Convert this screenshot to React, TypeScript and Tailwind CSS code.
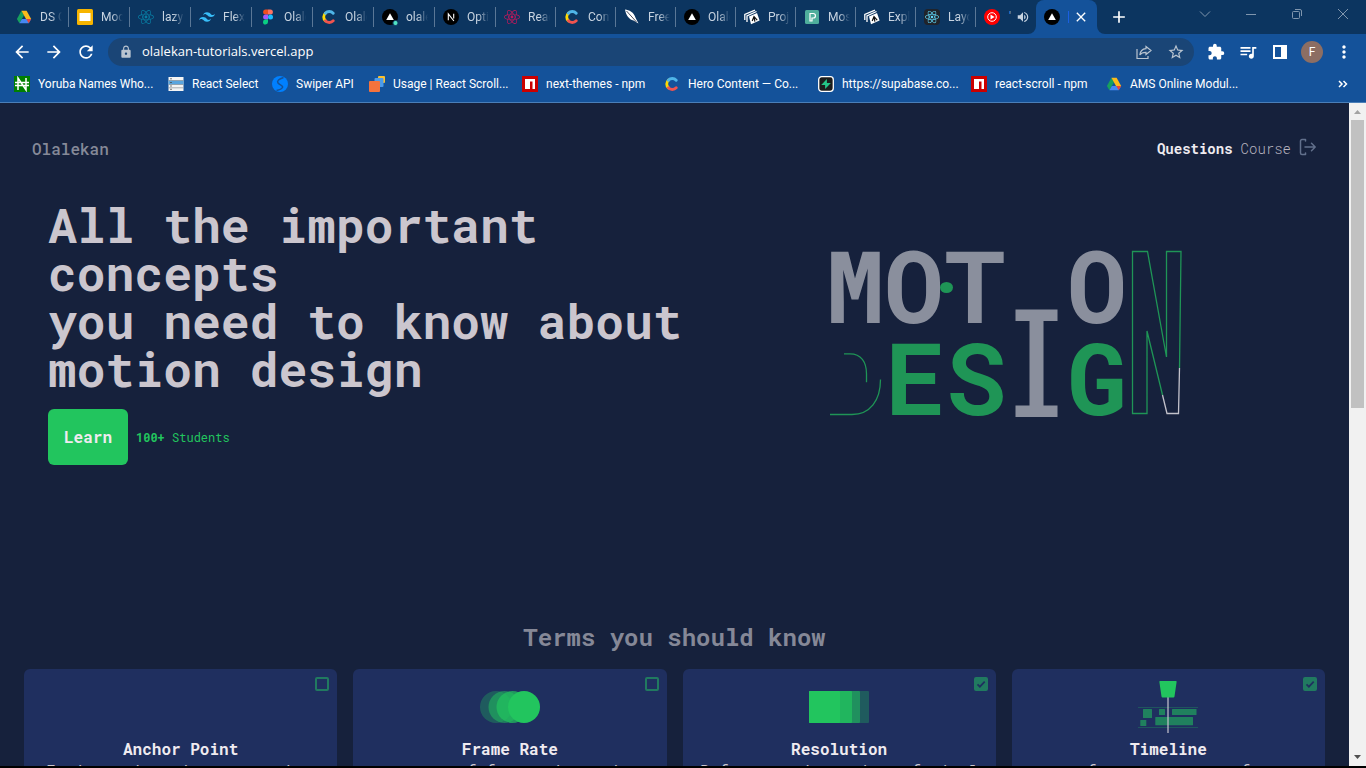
import type { ReactNode } from "react";
import { FaReact } from "react-icons/fa";
import { SiTailwindcss } from "react-icons/si";
import {
  MdArrowBack,
  MdArrowForward,
  MdRefresh,
  MdLock,
  MdStarBorder,
  MdExtension,
  MdQueueMusic,
  MdMoreVert,
  MdAdd,
  MdClose,
  MdVolumeUp,
} from "react-icons/md";

const Drive = () => (
  <svg viewBox="0 0 16 16" className="size-4 shrink-0">
    <path d="M5.4 1.8 8 6.3 3.4 14.2.9 9.9z" fill="#17a05d" />
    <path d="M5.4 1.8h5.2l4.6 8.1H10z" fill="#fcbb1b" />
    <path d="M5.9 9.9h9.3l-2.5 4.3H3.4z" fill="#4688f4" />
    <path d="M10.3 9.9h4.9l-2.5 4.3z" fill="#e8453c" />
  </svg>
);

const Slides = () => (
  <svg viewBox="0 0 16 16" className="size-4 shrink-0">
    <rect width="16" height="16" rx="1.5" fill="#f7b500" />
    <rect x="2.5" y="4" width="11" height="8" fill="#fff" />
  </svg>
);

const Figma = () => (
  <svg viewBox="0 0 16 16" className="size-4 shrink-0">
    <path d="M8 .5H5.6a2.5 2.5 0 0 0 0 5H8z" fill="#f24e1e" />
    <path d="M8 .5h2.4a2.5 2.5 0 0 1 0 5H8z" fill="#ff7262" />
    <path d="M8 5.5H5.6a2.5 2.5 0 0 0 0 5H8z" fill="#a259ff" />
    <circle cx="10.5" cy="8" r="2.5" fill="#1abcfe" />
    <path d="M8 10.5H5.6A2.5 2.5 0 1 0 8 13z" fill="#0acf83" />
  </svg>
);

const Contentful = () => (
  <svg viewBox="0 0 16 16" className="size-4 shrink-0" fill="none" strokeWidth="3" strokeLinecap="round">
    <path d="M4.4 4.2a5.4 5.4 0 0 0 0 7.6" stroke="#ffda00" />
    <path d="M4.4 4.2a5.4 5.4 0 0 1 7.8 0" stroke="#4fb5e8" />
    <path d="M4.4 11.8a5.4 5.4 0 0 0 7.8 0" stroke="#f0544f" />
  </svg>
);

const Vercel = ({ dot = false }: { dot?: boolean }) => (
  <svg viewBox="0 0 16 16" className="size-4 shrink-0 overflow-visible">
    <circle cx="8" cy="8" r="8" fill="#000" />
    <path d="M8 4.2 11.8 11H4.2z" fill="#fff" />
    {dot && <circle cx="13.5" cy="14" r="2.6" fill="#50e3c2" stroke="#0c3560" />}
  </svg>
);

const Next = () => (
  <svg viewBox="0 0 16 16" className="size-4 shrink-0">
    <circle cx="8" cy="8" r="8" fill="#000" />
    <path d="M5.3 11.2V4.8l5.6 7.2M10.7 4.8v4.6" stroke="#fff" strokeWidth="1.1" fill="none" />
  </svg>
);

const Feather = () => (
  <svg viewBox="0 0 16 16" className="size-4 shrink-0">
    <path d="M1 .5c4 .5 9 2.500 10.600 8.500L14.500 14.500 9.500 11.500C5 10.500 2 6 1 .5z" fill="#fff" />
    <path d="M2.500 2 12.500 13" stroke="#223" strokeWidth=".8" />
  </svg>
);

const Sheets = () => (
  <svg viewBox="0 0 16 16" className="size-4 shrink-0">
    <path d="M.8 11V5.400L11 1.200M3 13V6.800L12.500 2.500" stroke="#fff" strokeWidth="1.300" fill="none" />
    <path d="M5 7.500 13 4l2.600 7.600L7 15.200z" fill="#fff" />
    <path d="m8.200 12 1.800-4.300 3.200 3.400M10 7.700l.9 5" stroke="#111" strokeWidth="1.200" fill="none" />
  </svg>
);

const Postman = () => (
  <svg viewBox="0 0 16 16" className="size-4 shrink-0">
    <rect x="1" y="1" width="14" height="14" rx="1.500" fill="#4fae9c" />
    <path d="M6 12V4.500h3.200a2.200 2.200 0 0 1 0 4.500H8v3z" fill="none" stroke="#fff" strokeWidth="1.200" />
  </svg>
);

const ReactDark = () => (
  <span className="flex size-4 shrink-0 items-center justify-center rounded-sm bg-[#20232a]">
    <FaReact className="size-3.5 text-[#61dafb]" />
  </span>
);

const YouTubeMusic = () => (
  <svg viewBox="0 0 16 16" className="size-4 shrink-0">
    <circle cx="8" cy="8" r="8" fill="#f00" />
    <circle cx="8" cy="8" r="4.300" fill="none" stroke="#fff" />
    <path d="M6.500 5.600 10.600 8l-4.100 2.400z" fill="#fff" />
  </svg>
);

const Naira = () => (
  <svg viewBox="0 0 16 16" className="size-4 shrink-0">
    <rect width="16" height="16" fill="#008000" />
    <path d="M4 14V2l8 12V2M1 6.500h14M1 9.500h14" stroke="#fff" strokeWidth="1.500" fill="none" />
  </svg>
);

const SelectIcon = () => (
  <svg viewBox="0 0 16 16" className="size-4 shrink-0">
    <rect x=".5" y="1" width="15" height="14" fill="#f4f4f4" />
    <rect x=".5" y="4.500" width="15" height="4" fill="#5aa5de" />
    <path d="M.5 4.500h15M.5 8.500h15M.5 11.800h15" stroke="#8a8f96" strokeWidth=".7" />
    <path d="M2 2.800h2M2 6.500h2M2 10h2M2 13.300h2" stroke="#444" strokeWidth=".7" />
  </svg>
);

const Swiper = () => (
  <svg viewBox="0 0 16 16" className="size-4 shrink-0">
    <circle cx="8" cy="8" r="8" fill="#0080ff" />
    <path d="M11.500 1.500C7 3 4.500 5 6 7s5.500 2.500 4.500 4.500S7 14 4.500 14.500" stroke="#14529a" strokeWidth="1.500" fill="none" />
  </svg>
);

const Stack = () => (
  <svg viewBox="0 0 16 16" className="size-4 shrink-0">
    <rect x="9" y="0" width="7" height="7" rx="1" fill="#fbc02d" />
    <rect x="5.500" y="2" width="9" height="9" rx="1" fill="#4c9bea" />
    <rect x="0" y="5" width="11" height="11" rx="1" fill="#f4733d" />
  </svg>
);

const Npm = () => (
  <svg viewBox="0 0 16 16" className="size-4 shrink-0">
    <rect width="16" height="16" fill="#cb0000" />
    <path d="M3 3h10v10h-2.500V5.500H8V13H3z" fill="#fff" />
  </svg>
);

const Supabase = () => (
  <svg viewBox="0 0 16 16" className="size-4 shrink-0">
    <rect x=".7" y=".7" width="14.600" height="14.600" rx="3" fill="#1c1c1c" stroke="#fff" strokeWidth="1.300" />
    <path d="M8.900 3v4h4L7.100 13V9H3.200z" fill="#24c487" />
  </svg>
);

const wide = "w-[61px]";
const narrow = "w-[60px]";

const tabs: { title: string; icon: ReactNode; width: string }[] = [
  { title: "DS Colors", icon: <Drive />, width: wide },
  { title: "Modules", icon: <Slides />, width: wide },
  { title: "lazy", icon: <FaReact className="size-4 shrink-0 text-[#087ea4]" />, width: wide },
  { title: "Flexbox", icon: <SiTailwindcss className="size-4 shrink-0 text-[#38bdf8]" />, width: wide },
  { title: "Olalekan", icon: <Figma />, width: wide },
  { title: "Olalekan", icon: <Contentful />, width: wide },
  { title: "olalekan", icon: <Vercel dot />, width: wide },
  { title: "Optimize", icon: <Next />, width: wide },
  { title: "React", icon: <FaReact className="size-4 shrink-0 text-[#c2185b]" />, width: narrow },
  { title: "Content", icon: <Contentful />, width: narrow },
  { title: "Freelance", icon: <Feather />, width: narrow },
  { title: "Olalekan", icon: <Vercel />, width: narrow },
  { title: "Project", icon: <Sheets />, width: narrow },
  { title: "Most", icon: <Postman />, width: narrow },
  { title: "Explore", icon: <Sheets />, width: narrow },
  { title: "Layout", icon: <ReactDark />, width: narrow },
];

const bookmarks: { title: string; icon: ReactNode; width: string }[] = [
  { title: "Yoruba Names Who...", icon: <Naira />, width: "w-[154px]" },
  { title: "React Select", icon: <SelectIcon />, width: "w-[104px]" },
  { title: "Swiper API", icon: <Swiper />, width: "w-[97px]" },
  { title: "Usage | React Scroll...", icon: <Stack />, width: "w-[153px]" },
  { title: "next-themes - npm", icon: <Npm />, width: "w-[142px]" },
  { title: "Hero Content — Co...", icon: <Contentful />, width: "w-[154px]" },
  { title: "https://supabase.co...", icon: <Supabase />, width: "w-[153px]" },
  { title: "react-scroll - npm", icon: <Npm />, width: "w-[135px]" },
  { title: "AMS Online Modul...", icon: <Drive />, width: "w-[140px]" },
];

function TabStrip() {
  return (
    <div className="flex h-[34px] shrink-0 bg-[#0c3560] pl-2">
      {tabs.map((tab, i) => (
        <button key={i} className={`flex shrink-0 items-center pl-2 text-left ${tab.width}`}>
          {tab.icon}
          <span className="ml-2 w-[22px] overflow-hidden whitespace-nowrap text-xs text-[#c8d4e1] [mask-image:linear-gradient(to_right,#000_50%,transparent)]">
            {tab.title}
          </span>
          <span className="ml-auto h-5 w-px bg-[#5a7796]" />
        </button>
      ))}
      <button aria-label="YouTube Music" className="flex w-[60px] shrink-0 items-center pl-2">
        <YouTubeMusic />
        <span className="ml-2 w-1 overflow-hidden text-xs text-[#6fa8e8]">'</span>
        <MdVolumeUp className="ml-1 size-3.5 text-[#c8d4e1]" />
      </button>
      <div className="relative flex w-[61px] shrink-0 items-center rounded-t-lg bg-[#14529a] pl-2">
        <svg viewBox="0 0 8 8" className="absolute bottom-0 -left-2 size-2" fill="#14529a">
          <path d="M8 0v8H0a8 8 0 0 0 8-8z" />
        </svg>
        <svg viewBox="0 0 8 8" className="absolute -right-2 bottom-0 size-2" fill="#14529a">
          <path d="M0 0v8h8a8 8 0 0 1-8-8z" />
        </svg>
        <Vercel />
        <span className="ml-2 h-3 w-px bg-[#1a5fe0]" />
        <button aria-label="Close tab" className="ml-1">
          <MdClose className="size-4 text-white" />
        </button>
      </div>
      <button aria-label="New tab" className="ml-3 text-white">
        <MdAdd className="size-5" />
      </button>
      <div className="ml-auto flex h-7 text-[#8096ae]">
        <button aria-label="Search tabs" className="flex w-[46px] items-center justify-center">
          <svg viewBox="0 0 12 12" className="size-3" fill="none" stroke="currentColor">
            <path d="m1 3.500 5 5 5-5" />
          </svg>
        </button>
        <button aria-label="Minimize" className="flex w-[46px] items-center justify-center">
          <svg viewBox="0 0 12 12" className="size-3" stroke="currentColor">
            <path d="M1 6.500h10" />
          </svg>
        </button>
        <button aria-label="Restore" className="flex w-[46px] items-center justify-center">
          <svg viewBox="0 0 12 12" className="size-3" fill="none" stroke="currentColor">
            <rect x="1.500" y="3.500" width="7" height="7" rx="1" />
            <path d="M4 1.500h5a1.500 1.500 0 0 1 1.500 1.500v5" />
          </svg>
        </button>
        <button aria-label="Close" className="flex w-[46px] items-center justify-center">
          <svg viewBox="0 0 12 12" className="size-3" stroke="currentColor">
            <path d="m1 1 10 10M11 1 1 11" />
          </svg>
        </button>
      </div>
    </div>
  );
}

function Toolbar() {
  return (
    <div className="flex h-9 shrink-0 items-center bg-[#14529a] pr-1.5 pl-1.5 text-white">
      <button aria-label="Back" className="flex w-8 justify-center"><MdArrowBack className="size-5" /></button>
      <button aria-label="Forward" className="flex w-8 justify-center"><MdArrowForward className="size-5" /></button>
      <button aria-label="Reload" className="flex w-8 justify-center"><MdRefresh className="size-5" /></button>
      <div className="ml-1.5 flex h-7 grow items-center rounded-full bg-[#1a4576] pl-[11px] text-[#b9c4d0]">
        <MdLock className="size-3.5" />
        <input
          aria-label="Address"
          defaultValue="olalekan-tutorials.vercel.app"
          className="ml-[9px] min-w-0 grow bg-transparent font-['Open_Sans','Noto_Sans',sans-serif] text-[13px] text-white outline-none"
        />
        <button aria-label="Share" className="flex w-8 justify-center">
          <svg viewBox="0 0 16 16" className="size-4" fill="none" stroke="currentColor" strokeWidth="1.200">
            <path d="M1 5v9.500h11V12" />
            <path d="M10 2.500 15 6.500 10 10.500V8.300C7 8.200 5.200 9 3.800 11 4.200 7.500 6.500 5 10 4.700z" />
          </svg>
        </button>
        <button aria-label="Bookmark this tab" className="mr-0.5 flex w-8 justify-center"><MdStarBorder className="size-[18px]" /></button>
      </div>
      <button aria-label="Extensions" className="ml-1.5 flex w-8 justify-center"><MdExtension className="size-[18px]" /></button>
      <button aria-label="Media" className="flex w-8 justify-center"><MdQueueMusic className="size-5" /></button>
      <button aria-label="Side panel" className="flex w-8 justify-center">
        <svg viewBox="0 0 14 14" className="size-3.5" fill="#fff">
          <path d="M0 0h14v14H0zM2 2v10h6V2z" fillRule="evenodd" />
        </svg>
      </button>
      <button aria-label="Profile" className="flex w-8 justify-center">
        <span className="flex size-[22px] items-center justify-center rounded-full bg-[#8d6e63] text-xs">F</span>
      </button>
      <button aria-label="Menu" className="flex w-8 justify-center"><MdMoreVert className="size-5" /></button>
    </div>
  );
}

function Bookmarks() {
  return (
    <div className="flex h-[33px] shrink-0 items-center border-b border-[#4b7fb8] bg-[#14529a] pb-1 pl-3.5 text-xs text-white">
      {bookmarks.map((b, i) => (
        <a key={i} href="#" className={`flex shrink-0 items-center gap-2 whitespace-nowrap ${b.width}`}>
          {b.icon}
          {b.title}
        </a>
      ))}
      <button aria-label="More bookmarks" className="mr-[18px] ml-auto">
        <svg viewBox="0 0 10 8" className="h-2 w-2.5" fill="none" stroke="#fff" strokeWidth="1.500">
          <path d="m1 1 3 3-3 3M5.500 1l3 3-3 3" />
        </svg>
      </button>
    </div>
  );
}

function MotionArt() {
  return (
    <svg
      viewBox="829 250 354 168"
      className="mt-[49px] h-[168px] w-[354px] overflow-visible font-['Roboto_Mono','DejaVu_Sans_Mono',monospace] text-[100px] font-bold"
      aria-hidden="true"
    >
      <g fill="#8a8f9d">
        <text x="825" y="323">M</text>
        <text x="884" y="323">O</text>
        <text x="945" y="323">T</text>
        <text x="1067" y="323">O</text>
        <rect x="1015.500" y="309.500" width="42" height="11.500" />
        <rect x="1029.500" y="320" width="14" height="87" />
        <rect x="1015.500" y="405.500" width="42" height="11.500" />
      </g>
      <g fill="#1f9556">
        <text x="885" y="415">E</text>
        <text x="946" y="415">S</text>
        <text x="1067" y="415">G</text>
        <ellipse cx="946.500" cy="287.500" rx="6.500" ry="5.500" />
      </g>
      <g fill="none" stroke="#1f9556" strokeWidth="1.300">
        <path d="M844 353.800h6c11 0 16.500 8 16.500 20v8.500" />
        <path d="M830 414.500h22c18 0 28.500-14 28.500-35" />
        <polyline points="1179.500,368 1181,251.500 1166.500,251.500 1166.500,357 1147.500,251.500 1132.500,251.500 1132.500,413.500 1147,413.500 1147,331 1162.500,395" />
        <polyline points="1162.500,395 1167,413.500 1178.500,413.500 1179.500,368" stroke="#c3c2cb" />
      </g>
    </svg>
  );
}

const FrameRateArt = () => (
  <svg viewBox="0 0 60 60" className="size-[60px]" fill="#22c55e">
    <circle cx="16" cy="30" r="16" opacity=".3" />
    <circle cx="24.500" cy="30" r="16" opacity=".5" />
    <circle cx="32.500" cy="30" r="16" opacity=".7" />
    <circle cx="44" cy="30" r="16" />
  </svg>
);

const ResolutionArt = () => (
  <svg viewBox="0 0 60 60" className="size-[60px]" fill="#22c55e">
    <rect y="14" width="60" height="32" rx="1" opacity=".3" />
    <rect y="14" width="51" height="32" rx="1" opacity=".5" />
    <rect y="14" width="43" height="32" rx="1" opacity=".7" />
    <rect y="14" width="31" height="32" rx="1" />
  </svg>
);

const TimelineArt = () => (
  <svg viewBox="0 0 60 60" className="size-[60px]">
    <path d="M0 30.500h60M0 50.500h60" stroke="#22c55e" opacity=".25" />
    <g fill="#22c55e" opacity=".55">
      <rect x="5" y="32" width="9" height="9" rx=".5" />
      <rect x="21" y="32" width="6" height="6" rx=".5" />
      <rect x="34" y="32" width="24.500" height="6" rx=".5" />
      <rect x="17.300" y="40" width="37.700" height="8.300" rx=".5" />
      <rect x="2.300" y="43" width="6" height="6" rx=".5" />
    </g>
    <path d="M30 20v36" stroke="#c7c5cf" strokeWidth="2" opacity=".6" />
    <path d="M22 4h16q.8 0 .6 1L36.500 19.500q-.2.900-1 .9h-11q-.8 0-1-.9L21.400 5q-.2-1 .6-1z" fill="#22c55e" />
  </svg>
);

const terms: { title: string; text: string; art: ReactNode; done: boolean }[] = [
  { title: "Anchor Point", text: "It is a pivot in a comp that", art: <div className="size-[60px]" />, done: false },
  { title: "Frame Rate", text: "a count of frames in motion", art: <FrameRateArt />, done: false },
  { title: "Resolution", text: "Refers to the number of pixel", art: <ResolutionArt />, done: true },
  { title: "Timeline", text: "for a sequence of", art: <TimelineArt />, done: true },
];

function TermCard({ title, text, art, done }: (typeof terms)[number]) {
  return (
    <article className="relative flex h-60 flex-col items-center rounded-md bg-[#1f2f5f] px-4 pt-2 text-center">
      <input
        type="checkbox"
        aria-label={title}
        defaultChecked={done}
        className="peer absolute top-2 right-2 size-3.5 appearance-none rounded-[2px] border-2 border-[#217a60] checked:bg-[#217a60]"
      />
      <svg
        viewBox="0 0 14 14"
        className="pointer-events-none absolute top-2 right-2 hidden size-3.5 peer-checked:block"
        fill="none"
        stroke="#1f2f5f"
        strokeWidth="1.700"
      >
        <path d="m3.500 7.300 2.400 2.400 4.800-5" />
      </svg>
      {art}
      <h3 className="text-base leading-6 font-bold text-[#efebf0]">{title}</h3>
      <p className="text-base leading-5 text-[#cbc6ce]">{text}</p>
    </article>
  );
}

export default function App() {
  return (
    <div className="flex h-screen flex-col overflow-hidden bg-black font-['Roboto','Open_Sans',sans-serif]">
      <TabStrip />
      <Toolbar />
      <Bookmarks />
      <div className="mb-0.5 flex min-h-0 grow">
        <main className="min-w-0 grow overflow-hidden bg-[#16213c] font-['Roboto_Mono','DejaVu_Sans_Mono',monospace]">
          <header className="flex h-[92px] items-center justify-between px-8">
            <a href="#" className="text-base font-medium text-[#858998]">Olalekan</a>
            <nav className="flex items-center gap-2 text-sm">
              <a href="#" className="font-bold text-[#efebf0]">Questions</a>
              <a href="#" className="font-light text-[#b9b6c0]">Course</a>
              <button aria-label="Log out" className="pb-1">
                <svg viewBox="0 0 18 18" className="size-[18px]" fill="none" stroke="#62708c" strokeWidth="1.500" strokeLinecap="round" strokeLinejoin="round">
                  <path d="M6.500 1.500H3a1.500 1.500 0 0 0-1.500 1.500v12A1.500 1.500 0 0 0 3 16.500h3.500M6.500 1.500v1.500M6.500 16.500V15M6 9h10M12.500 5.300 16.200 9l-3.700 3.700" />
                </svg>
              </button>
            </nav>
          </header>
          <section className="flex items-start pt-1.5 pr-6 pl-12">
            <div className="flex-1 basis-0">
              <h1 className="text-5xl leading-[48px] font-bold text-[#cbc6ce]">
                All the important concepts
                <br />
                you need to know about motion design
              </h1>
              <div className="mt-4 flex items-center gap-2">
                <button className="h-14 rounded-md bg-[#22c55e] px-4 text-base font-bold text-[#efebf0]">Learn</button>
                <p className="text-xs text-[#22c55e]">
                  <strong>100+</strong> Students
                </p>
              </div>
            </div>
            <div className="flex flex-1 basis-0 justify-center">
              <MotionArt />
            </div>
          </section>
          <section className="mt-[156px] px-6">
            <h2 className="mb-4 text-center text-2xl leading-8 font-bold text-[#858897]">Terms you should know</h2>
            <div className="grid grid-cols-4 gap-4">
              {terms.map((t) => (
                <TermCard key={t.title} {...t} />
              ))}
            </div>
          </section>
        </main>
        <div className="flex w-[17px] shrink-0 flex-col items-center bg-[#f1f1f1]">
          <svg viewBox="0 0 17 17" className="h-[17px] w-[17px]" fill="#a3a3a3">
            <path d="M5 11h7L8.500 7z" />
          </svg>
          <div className="h-72 w-[13px] bg-[#c1c1c1]" />
          <svg viewBox="0 0 17 17" className="mt-auto h-[17px] w-[17px]" fill="#505050">
            <path d="M5 6h7l-3.500 4z" />
          </svg>
        </div>
      </div>
    </div>
  );
}
